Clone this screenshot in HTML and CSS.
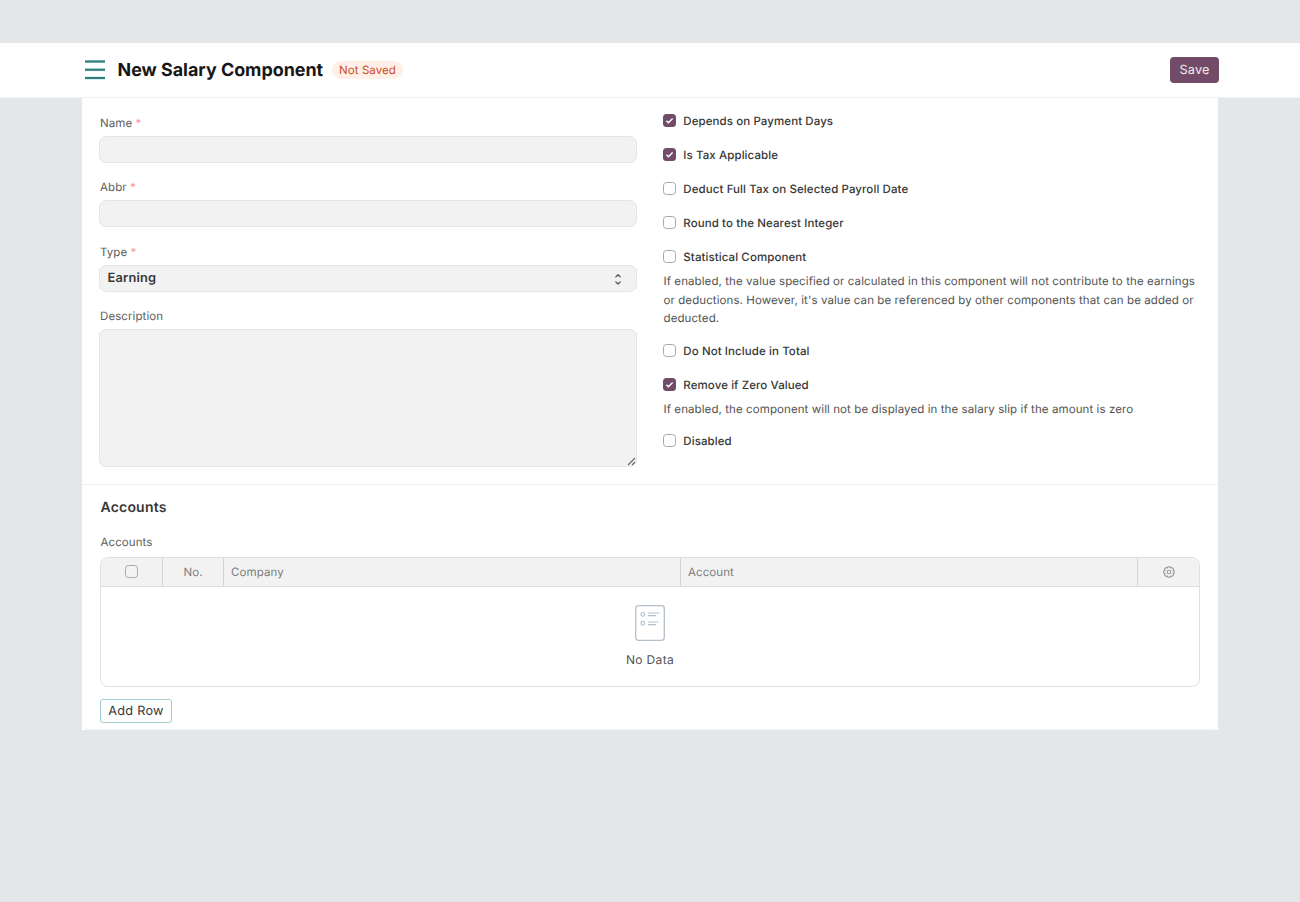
FILE: index.html
```html
<!DOCTYPE html>
<html lang="en">
<head>
<meta charset="utf-8">
<title>New Salary Component</title>
<link rel="stylesheet" href="styles.css">
</head>
<body>
<header class="page-head">
  <div class="head-inner">
    <svg class="menu" width="20" height="20" viewBox="0 0 20 20"><g stroke="#b9dede" stroke-width="3"><path d="M0 1.5h20M0 9.7h20M0 18h20"/></g><g stroke="#2f7b7e" stroke-width="2"><path d="M0 1.5h20M0 9.7h20M0 18h20"/></g></svg>
    <h1 class="title"><span>New Salary Component</span></h1>
    <span class="pill"><span>Not Saved</span></span>
    <button class="save">Save</button>
  </div>
</header>
<main class="card">
  <section class="form">
    <div class="left">
      <div class="field"><label class="label">Name <span class="req">*</span></label><div class="input"></div></div>
      <div class="field"><label class="label">Abbr <span class="req">*</span></label><div class="input"></div></div>
      <div class="field"><label class="label">Type <span class="req">*</span></label><div class="input select"><span>Earning</span>
        <svg width="8" height="14" viewBox="0 0 8 14" fill="none" stroke="#505050" stroke-width="1.3" stroke-linecap="round" stroke-linejoin="round"><path d="M1.8 4.9 4 2.8l2.2 2.1M1.8 9.9 4 12l2.2-2.1"/></svg></div></div>
      <div class="field"><label class="label">Description</label><div class="input area">
        <svg width="9" height="9" viewBox="0 0 9 9" stroke="#666" stroke-width="1.1" fill="none"><path d="M1 8 8 1M5 8l3-3"/></svg></div></div>
    </div>
    <div class="right">
      <div class="check"><span class="box on"><svg width="13" height="13" viewBox="0 0 13 13"><path d="M3.4 6.8 5.4 8.7 9.6 4.4"/></svg></span><span>Depends on Payment Days</span></div>
      <div class="check"><span class="box on"><svg width="13" height="13" viewBox="0 0 13 13"><path d="M3.4 6.8 5.4 8.7 9.6 4.4"/></svg></span><span>Is Tax Applicable</span></div>
      <div class="check"><span class="box"></span><span>Deduct Full Tax on Selected Payroll Date</span></div>
      <div class="check"><span class="box"></span><span>Round to the Nearest Integer</span></div>
      <div class="check"><span class="box"></span><span>Statistical Component</span></div>
      <p class="help">If enabled, the value specified or calculated in this component will not contribute to the earnings<br>or deductions. However, it's value can be referenced by other components that can be added or<br>deducted.</p>
      <div class="check"><span class="box"></span><span>Do Not Include in Total</span></div>
      <div class="check"><span class="box on"><svg width="13" height="13" viewBox="0 0 13 13"><path d="M3.4 6.8 5.4 8.7 9.6 4.4"/></svg></span><span>Remove if Zero Valued</span></div>
      <p class="help single">If enabled, the component will not be displayed in the salary slip if the amount is zero</p>
      <div class="check"><span class="box"></span><span>Disabled</span></div>
    </div>
  </section>
  <section class="accounts">
    <h2 class="heading"><span>Accounts</span></h2>
    <div class="label">Accounts</div>
    <div class="grid">
      <div class="grid-head">
        <div class="cell mid"><span class="box"></span></div>
        <div class="cell mid">No.</div>
        <div class="cell">Company</div>
        <div class="cell">Account</div>
        <div class="cell mid"><svg width="12" height="12" viewBox="0 0 12 12" fill="none" stroke="#999" stroke-width="1.1" stroke-linejoin="round"><path d="M5 .7h2l.4 1.2 1.3-.5 1.8 1.8-.5 1.3 1.3.5v2l-1.3.5.5 1.3-1.8 1.8-1.3-.5-.4 1.2H5l-.4-1.2-1.3.5-1.8-1.8.5-1.3L.7 7V5L2 4.5l-.5-1.3 1.8-1.8 1.3.5z"/><circle cx="6" cy="6" r="1.8"/></svg></div>
      </div>
      <div class="empty">
        <svg width="30" height="36" viewBox="0 0 30 36" fill="none" stroke="#b4bfc9"><rect x=".7" y=".7" width="28.6" height="34.6" rx="2.8" stroke-width="1.3"/><g stroke-width="1.1"><circle cx="7.8" cy="9.4" r="1.9"/><circle cx="7.8" cy="18.3" r="1.9"/><path d="M13 8h11.4M13 10.6h8M13 17h10.5M13 19.6h8"/></g></svg>
        <span>No Data</span>
      </div>
    </div>
    <button class="add">Add Row</button>
  </section>
</main>
</body>
</html>
```
FILE: styles.css
```css
* { box-sizing: border-box; }
body {
  margin: 0;
  padding-top: 43px;
  min-height: 902px;
  background: #e3e7ea;
  font: 400 11.5px/16px Inter, sans-serif;
  letter-spacing: .09px;
  text-rendering: geometricPrecision;
  color: #383838;
}
button { font: inherit; letter-spacing: .15px; padding: 1px 0 0; text-rendering: inherit; }
.page-head { height: 55px; background: #fff; border-bottom: 1px solid #f0f1f2; }
.head-inner { display: flex; align-items: center; height: 54px; padding: 0 81px 0 85px; }
.menu { display: block; }
.title { margin: 0 0 0 12.5px; padding-top: 2px; width: 206px; font-size: 17.9px; line-height: 24px; font-weight: 700; letter-spacing: 0; color: #171717; white-space: nowrap; }
.pill { margin-left: 8.5px; width: 71px; height: 18px; line-height: 18px; border-radius: 9px; background: #fff0e7; color: #cb4b1f; text-align: center; }
.save { margin-left: auto; width: 49px; height: 26px; padding-top: 2px; border: 0; border-radius: 4px; background: #714b67; color: #f4edf2; font-size: 12.7px; }
.card { width: 1136px; height: 632px; margin: 0 auto; background: #fff; }
.form { display: grid; grid-template-columns: 538px 537px; column-gap: 26px; height: 387px; padding: 5.5px 17px 0; border-bottom: 1px solid #f0f0f0; }
.left { padding-top: 10.25px; }
.field { margin-bottom: 15px; }
.field:nth-child(2) { margin: -.5px 0 15.5px; }
.label { display: block; padding-left: 1px; color: #5c5c5c; }
.field .label { position: relative; top: 1px; }
.req { color: #f29a9a; }
.input { height: 27.5px; margin-top: 6px; border: 1px solid #e5e5e5; border-radius: 7px; background: #f2f2f2; }
.select { display: flex; align-items: center; justify-content: space-between; padding: 0 14px 0 7.5px; font-size: 12.8px; font-weight: 600; letter-spacing: .2px; }
.select span { padding-top: 1.5px; }
.area { display: flex; align-items: flex-end; justify-content: flex-end; height: 137.5px; }
.check { display: flex; align-items: center; gap: 7px; height: 34px; font-weight: 500; padding-left: .3px; }
.box { display: block; width: 13px; height: 13px; border: 1px solid #a9a9a9; border-radius: 3.5px; background: #fff; }
.box.on { border: 0; background: #714b67; }
.box svg { display: block; fill: none; stroke: #fff; stroke-width: 1.5; }
.help { margin: -1.5px 0 6px .5px; line-height: 18.5px; color: #525252; white-space: nowrap; }
.help.single { margin-bottom: 5px; }
.accounts { height: 245px; padding: 11.5px 18px 0; border: 1px solid #f2f2f2; border-width: 0 0 1px; border-radius: 0 0 7px 7px; }
.heading { margin: 0 0 15.5px; padding-left: .5px; font-size: 14px; line-height: 22px; font-weight: 600; letter-spacing: .2px; }
.accounts .label { padding-left: .5px; }
.grid { height: 130.5px; margin-top: 6.5px; border: 1px solid #e3dfe1; border-radius: 8px; overflow: hidden; }
.grid-head { display: grid; grid-template-columns: 62px 61px 457px 457px 61px; height: 29px; background: #f2f2f2; border-bottom: 1px solid #e0dcde; color: #7c7c7c; }
.cell { display: flex; align-items: center; padding-left: 7px; border-right: 1px solid #d8d2d5; }
.cell:last-child { border-right: 0; }
.cell.mid { justify-content: center; padding-left: 0; }
.cell .box { background: #f4f4f4; }
.empty { display: flex; flex-direction: column; align-items: center; gap: 11.5px; padding-top: 18px; color: #525252; font-size: 12px; letter-spacing: .35px; }
.add { display: block; margin-top: 12px; width: 72px; height: 24px; padding-top: 2px; border: 1px solid #9fcfcf; border-radius: 3px; background: #fff; color: #383838; font-size: 12.7px; letter-spacing: .25px; }
```
